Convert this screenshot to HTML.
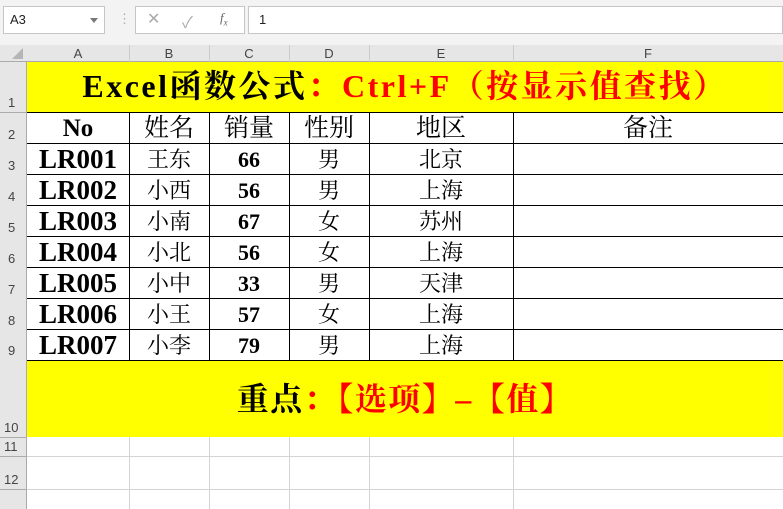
<!DOCTYPE html>
<html><head><meta charset="utf-8"><style>
*{margin:0;padding:0;box-sizing:border-box}
body{width:783px;height:509px;overflow:hidden;background:#fff;position:relative;font-family:"Liberation Sans","Noto Sans CJK SC",sans-serif}
.a{position:absolute}
.ser{font-family:"Liberation Serif","Noto Serif CJK SC",serif;font-weight:bold;color:#000}
.gl{background:#d4d4d4}
.bl{background:#000}
.hd{font-size:13px;color:#444;text-align:center}
.rn{font-size:13px;color:#444;left:4px}
.c{text-align:center;font-size:25px;line-height:31px;height:31px}
</style></head><body>
<div class="a" style="left:0;top:0;width:783px;height:45px;background:#f3f3f3"></div>
<div class="a" style="left:3px;top:6px;width:102px;height:28px;background:#fff;border:1px solid #c6c6c6"></div>
<div class="a" style="left:10px;top:12px;font-size:13px;color:#222">A3</div>
<div class="a" style="left:90px;top:18px;border-left:4px solid transparent;border-right:4px solid transparent;border-top:5px solid #777"></div>
<div class="a" style="left:118px;top:11px;color:#aaa;font-size:13px">⋮</div>
<div class="a" style="left:135px;top:6px;width:110px;height:28px;background:#fff;border:1px solid #c6c6c6"></div>
<div class="a" style="left:147px;top:9px;color:#aaa;font-size:16px">✕</div>
<div class="a" style="left:182px;top:9px;color:#aaa;font-size:16px">✓</div>
<div class="a" style="left:220px;top:10px;color:#666;font-size:13px;font-style:italic;font-family:'Liberation Serif',serif">f<sub style="font-size:9px">x</sub></div>
<div class="a" style="left:248px;top:6px;width:535px;height:28px;background:#fff;border:1px solid #c6c6c6"></div>
<div class="a" style="left:259px;top:12px;font-size:13px;color:#222">1</div>
<div class="a" style="left:0;top:45px;width:783px;height:17px;background:#e6e6e6;border-bottom:1px solid #ababab"></div>
<div class="a" style="left:0;top:62px;width:27px;height:447px;background:#e6e6e6;border-right:1px solid #ababab"></div>
<div class="a" style="left:12px;top:48px;border-left:11px solid transparent;border-bottom:11px solid #b5b5b5"></div>
<div class="a hd" style="left:27px;top:46px;width:102px">A</div>
<div class="a hd" style="left:129px;top:46px;width:80px">B</div>
<div class="a hd" style="left:209px;top:46px;width:80px">C</div>
<div class="a hd" style="left:289px;top:46px;width:80px">D</div>
<div class="a hd" style="left:369px;top:46px;width:144px">E</div>
<div class="a hd" style="left:513px;top:46px;width:270px">F</div>
<div class="a" style="left:129px;top:45px;width:1px;height:17px;background:#ccc"></div>
<div class="a" style="left:209px;top:45px;width:1px;height:17px;background:#ccc"></div>
<div class="a" style="left:289px;top:45px;width:1px;height:17px;background:#ccc"></div>
<div class="a" style="left:369px;top:45px;width:1px;height:17px;background:#ccc"></div>
<div class="a" style="left:513px;top:45px;width:1px;height:17px;background:#ccc"></div>
<div class="a rn" style="top:95px;left:8px">1</div>
<div class="a rn" style="top:127px;left:8px">2</div>
<div class="a rn" style="top:158px;left:8px">3</div>
<div class="a rn" style="top:189px;left:8px">4</div>
<div class="a rn" style="top:220px;left:8px">5</div>
<div class="a rn" style="top:251px;left:8px">6</div>
<div class="a rn" style="top:282px;left:8px">7</div>
<div class="a rn" style="top:313px;left:8px">8</div>
<div class="a rn" style="top:343px;left:8px">9</div>
<div class="a rn" style="top:420px">10</div>
<div class="a rn" style="top:439px">11</div>
<div class="a rn" style="top:472px">12</div>
<div class="a" style="left:0;top:112px;width:27px;height:1px;background:#ababab"></div>
<div class="a" style="left:0;top:437px;width:27px;height:1px;background:#ababab"></div>
<div class="a" style="left:0;top:456px;width:27px;height:1px;background:#ababab"></div>
<div class="a" style="left:0;top:489px;width:27px;height:1px;background:#ababab"></div>
<div class="a" style="left:27px;top:62px;width:756px;height:50px;background:#ffff00"></div>
<div class="a ser" style="left:27px;top:66px;width:756px;text-align:center;font-size:32px;line-height:40px;letter-spacing:2.5px">Excel函数公式<span style="color:#f00">：Ctrl+F（按显示值查找）</span></div>
<div class="a bl" style="left:27px;top:112px;width:756px;height:1px"></div>
<div class="a bl" style="left:27px;top:143px;width:756px;height:1px"></div>
<div class="a bl" style="left:27px;top:174px;width:756px;height:1px"></div>
<div class="a bl" style="left:27px;top:205px;width:756px;height:1px"></div>
<div class="a bl" style="left:27px;top:236px;width:756px;height:1px"></div>
<div class="a bl" style="left:27px;top:267px;width:756px;height:1px"></div>
<div class="a bl" style="left:27px;top:298px;width:756px;height:1px"></div>
<div class="a bl" style="left:27px;top:329px;width:756px;height:1px"></div>
<div class="a bl" style="left:27px;top:360px;width:756px;height:1px"></div>
<div class="a bl" style="left:129px;top:112px;width:1px;height:248px"></div>
<div class="a bl" style="left:209px;top:112px;width:1px;height:248px"></div>
<div class="a bl" style="left:289px;top:112px;width:1px;height:248px"></div>
<div class="a bl" style="left:369px;top:112px;width:1px;height:248px"></div>
<div class="a bl" style="left:513px;top:112px;width:1px;height:248px"></div>
<div class="a" style="left:27px;top:361px;width:756px;height:76px;background:#ffff00"></div>
<div class="a ser" style="left:27px;top:379px;width:756px;text-align:center;font-size:32px;line-height:40px;letter-spacing:1.5px">重点<span style="color:#f00">：【选项】–【值】</span></div>
<div class="a gl" style="left:27px;top:456px;width:756px;height:1px"></div>
<div class="a gl" style="left:27px;top:489px;width:756px;height:1px"></div>
<div class="a gl" style="left:129px;top:437px;width:1px;height:72px"></div>
<div class="a gl" style="left:209px;top:437px;width:1px;height:72px"></div>
<div class="a gl" style="left:289px;top:437px;width:1px;height:72px"></div>
<div class="a gl" style="left:369px;top:437px;width:1px;height:72px"></div>
<div class="a gl" style="left:513px;top:437px;width:1px;height:72px"></div>
<div class="a ser" style="left:0;top:113px;width:783px">
<div class="a c" style="left:27px;top:0;width:102px">No</div>
<div class="a c" style="left:129px;top:0;width:80px;font-weight:normal">姓名</div>
<div class="a c" style="left:209px;top:0;width:80px;font-weight:normal">销量</div>
<div class="a c" style="left:289px;top:0;width:80px;font-weight:normal">性别</div>
<div class="a c" style="left:369px;top:0;width:144px;font-weight:normal">地区</div>
<div class="a c" style="left:513px;top:0;width:270px;font-weight:normal">备注</div>
</div>
<div class="a ser" style="left:0;top:144px;width:783px;font-weight:normal">
<div class="a c" style="left:27px;top:0;width:102px;font-weight:bold;font-size:27px">LR001</div><div class="a c" style="left:129px;top:0;width:80px;font-size:22px">王东</div><div class="a c" style="left:209px;top:0;width:80px;font-weight:bold;font-size:22px">66</div><div class="a c" style="left:289px;top:0;width:80px;font-size:22px">男</div><div class="a c" style="left:369px;top:0;width:144px;font-size:22px">北京</div>
<div class="a c" style="left:27px;top:31px;width:102px;font-weight:bold;font-size:27px">LR002</div><div class="a c" style="left:129px;top:31px;width:80px;font-size:22px">小西</div><div class="a c" style="left:209px;top:31px;width:80px;font-weight:bold;font-size:22px">56</div><div class="a c" style="left:289px;top:31px;width:80px;font-size:22px">男</div><div class="a c" style="left:369px;top:31px;width:144px;font-size:22px">上海</div>
<div class="a c" style="left:27px;top:62px;width:102px;font-weight:bold;font-size:27px">LR003</div><div class="a c" style="left:129px;top:62px;width:80px;font-size:22px">小南</div><div class="a c" style="left:209px;top:62px;width:80px;font-weight:bold;font-size:22px">67</div><div class="a c" style="left:289px;top:62px;width:80px;font-size:22px">女</div><div class="a c" style="left:369px;top:62px;width:144px;font-size:22px">苏州</div>
<div class="a c" style="left:27px;top:93px;width:102px;font-weight:bold;font-size:27px">LR004</div><div class="a c" style="left:129px;top:93px;width:80px;font-size:22px">小北</div><div class="a c" style="left:209px;top:93px;width:80px;font-weight:bold;font-size:22px">56</div><div class="a c" style="left:289px;top:93px;width:80px;font-size:22px">女</div><div class="a c" style="left:369px;top:93px;width:144px;font-size:22px">上海</div>
<div class="a c" style="left:27px;top:124px;width:102px;font-weight:bold;font-size:27px">LR005</div><div class="a c" style="left:129px;top:124px;width:80px;font-size:22px">小中</div><div class="a c" style="left:209px;top:124px;width:80px;font-weight:bold;font-size:22px">33</div><div class="a c" style="left:289px;top:124px;width:80px;font-size:22px">男</div><div class="a c" style="left:369px;top:124px;width:144px;font-size:22px">天津</div>
<div class="a c" style="left:27px;top:155px;width:102px;font-weight:bold;font-size:27px">LR006</div><div class="a c" style="left:129px;top:155px;width:80px;font-size:22px">小王</div><div class="a c" style="left:209px;top:155px;width:80px;font-weight:bold;font-size:22px">57</div><div class="a c" style="left:289px;top:155px;width:80px;font-size:22px">女</div><div class="a c" style="left:369px;top:155px;width:144px;font-size:22px">上海</div>
<div class="a c" style="left:27px;top:186px;width:102px;font-weight:bold;font-size:27px">LR007</div><div class="a c" style="left:129px;top:186px;width:80px;font-size:22px">小李</div><div class="a c" style="left:209px;top:186px;width:80px;font-weight:bold;font-size:22px">79</div><div class="a c" style="left:289px;top:186px;width:80px;font-size:22px">男</div><div class="a c" style="left:369px;top:186px;width:144px;font-size:22px">上海</div>
</div>
</body></html>
